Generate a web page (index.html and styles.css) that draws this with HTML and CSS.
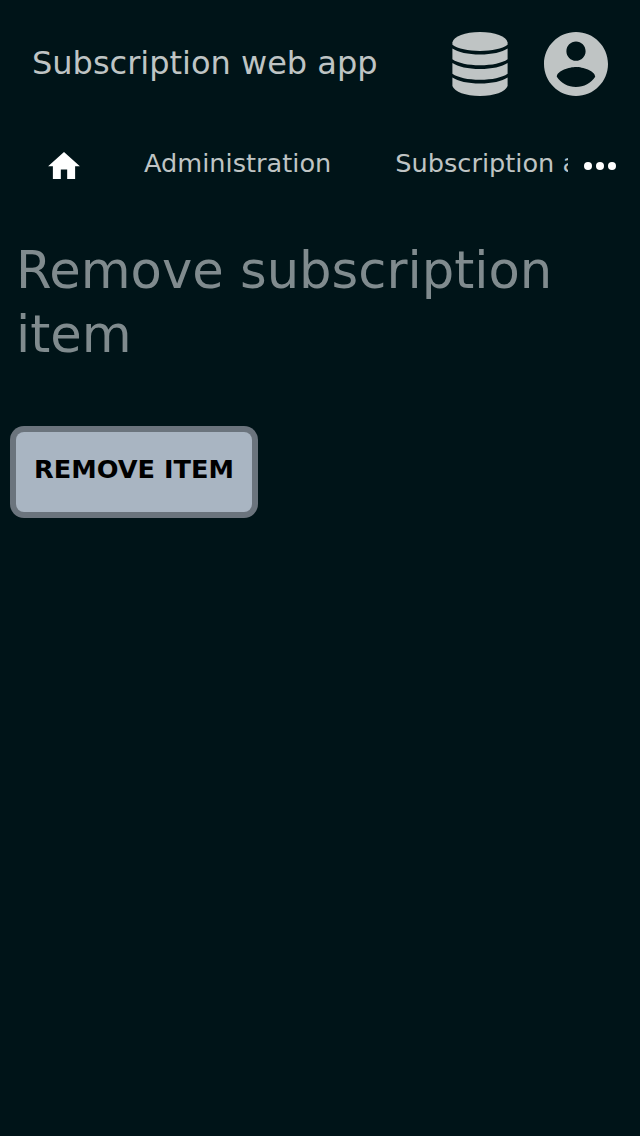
FILE: index.html
```html
<!DOCTYPE html>
<html lang="en">
<head>
<meta charset="utf-8">
<title>Subscription web app</title>
<link rel="stylesheet" href="styles.css">
</head>
<body>
<header class="topbar">
  <div class="brand">Subscription web app</div>
  <svg class="icon-db" viewBox="0 0 56 64"><path d="M.4 10.500C1.500 4.500 13 0 28 0s26.500 4.500 27.600 10.500v2.300C50 16.800 40 18.900 28 18.900S6 16.800 .4 12.800z"/><path d="M.4 16.400C6 20.200 16 22.400 28 22.400S50 20.200 55.600 16.400V27.300C50 31.200 40 33.300 28 33.300S6 31.200 .4 27.300z"/><path d="M.4 30.900C6 34.700 16 36.900 28 36.900S50 34.700 55.600 30.900V41.800C50 45.700 40 47.800 28 47.800S6 45.700 .4 41.800z"/><path d="M.4 45.400C6 49.200 16 51.400 28 51.400S50 49.200 55.600 45.400V54C53.500 59.700 42.500 64 28 64S2.500 59.700 .4 54z"/></svg>
  <svg class="icon-user" viewBox="2 2 20 20"><path d="M12 2C6.480 2 2 6.480 2 12s4.480 10 10 10 10-4.480 10-10S17.520 2 12 2zm0 3c1.660 0 3 1.340 3 3s-1.340 3-3 3-3-1.340-3-3 1.340-3 3-3zm0 14.200c-2.500 0-4.710-1.280-6-3.220.030-1.990 4-3.080 6-3.080 1.990 0 5.970 1.090 6 3.080-1.290 1.940-3.500 3.220-6 3.220z"/></svg>
</header>
<nav class="tabs">
  <div class="tab-list">
    <a class="tab-home"><svg viewBox="2 3 20 17"><path d="M10 20v-6h4v6h5v-8h3L12 3 2 12h3v8z"/></svg></a>
    <a class="tab">Administration</a>
    <a class="tab">Subscription administration</a>
  </div>
  <svg class="more" viewBox="0 0 32 8"><circle cx="4" cy="4" r="4"/><circle cx="16" cy="4" r="4"/><circle cx="28" cy="4" r="4"/></svg>
</nav>
<main class="content">
  <h1 class="title">Remove subscription item</h1>
  <button class="remove">REMOVE ITEM</button>
</main>
</body>
</html>
```

FILE: styles.css
```css
* { box-sizing: border-box; }
body { margin: 0; background: #001418; font-family: "DejaVu Sans", sans-serif; color: #bfc4c4; }
.topbar { display: flex; align-items: center; height: 128px; padding: 0 32px; }
.brand { flex: 1; padding-bottom: 2px; font-size: 32px; line-height: 48px; white-space: nowrap; }
.icon-db { width: 56px; height: 64px; margin-right: 36px; fill: #bfc4c4; }
.icon-user { width: 64px; height: 64px; fill: #bfc4c4; }
.tabs { display: flex; align-items: center; height: 72px; padding-right: 24px; }
.tab-list { display: flex; align-items: center; width: 568px; height: 70px; margin: 0 16px 2px 0; overflow: hidden; white-space: nowrap; }
.tab-home { flex: none; width: 32px; height: 27px; margin: 5px 64px 0 48px; }
.tab-home svg { display: block; width: 32px; height: 27px; fill: #fff; }
.tab { flex: none; margin-right: 64px; font-size: 25.600px; line-height: 40px; }
.more { flex: none; width: 32px; height: 8px; margin-top: 4px; fill: #fff; }
.content { padding: 38px 16px; }
.title { margin: 0 0 66px; font-size: 51.200px; line-height: 64px; font-weight: 400; color: #808b8e; }
.remove { display: block; width: 236px; height: 80px; padding: 0 0 6px; border: 0; border-radius: 8px; background: #a9b5c2; box-shadow: 0 0 0 6px #6b747d; color: #000; font: bold 25.600px "DejaVu Sans", sans-serif; white-space: nowrap; }
```
